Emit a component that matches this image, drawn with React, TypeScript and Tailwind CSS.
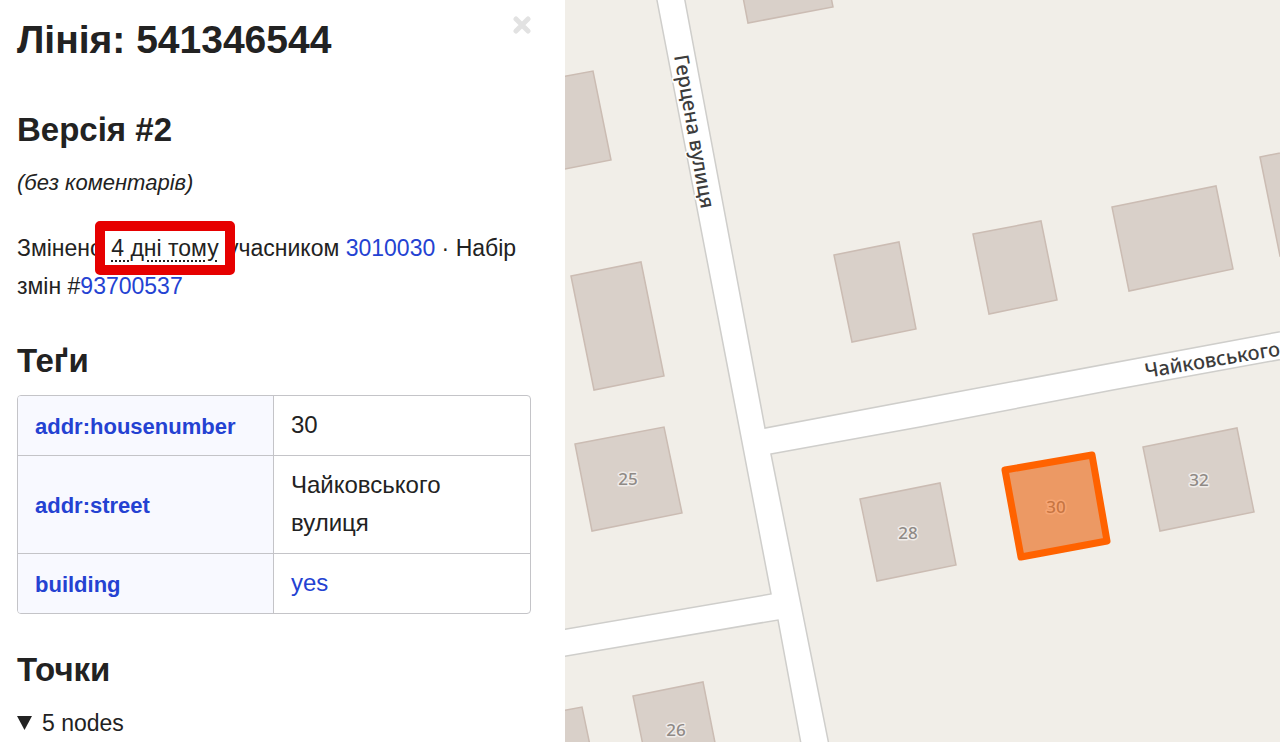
import type { ReactNode } from "react";

// ---------------------------------------------------------------------------
// Data
// ---------------------------------------------------------------------------
interface Tag {
  name: string;
  value: string;
  href?: string;
}

interface Building {
  points: string;
  label?: { text: string; x: number; y: number };
}

const TAGS: Tag[] = [
  { name: "addr:housenumber", value: "30" },
  { name: "addr:street", value: "Чайковського вулиця" },
  { name: "building", value: "yes", href: "#building-yes" },
];

// Land between the roads, the roads are the white gaps
const BLOCKS = [
  "555,-10 655,-10 730,380 771,594 555,631",
  "683,-10 1300,-10 1300,328 967,390 765,428",
  "771,454 920,427 1113,390 1300,356 1300,760 832,760",
  "555,658 778,620 804,760 555,760",
];

const SELECTED = "1005,470 1092,455 1107,541 1021,557";

const BUILDINGS: Building[] = [
  { points: "742,-8 748,23 833,7 830,-8" },
  { points: "550,79 593,71 611,160 550,172" },
  { points: "571,276 641,262 664,376 594,390" },
  { points: "834,255 899,242 916,329 852,342" },
  { points: "973,234 1041,221 1057,300 989,314" },
  { points: "1112,207 1216,186 1233,269 1129,291" },
  { points: "1260,157 1290,151 1310,250 1280,256" },
  { points: "575,444 664,427 682,513 592,531", label: { text: "25", x: 628, y: 485 } },
  { points: "860,499 940,483 956,565 877,581", label: { text: "28", x: 908, y: 539 } },
  { points: SELECTED, label: { text: "30", x: 1056, y: 513 } },
  { points: "1143,447 1237,428 1254,512 1160,531", label: { text: "32", x: 1199, y: 486 } },
  { points: "633,696 703,682 720,768 650,780", label: { text: "26", x: 676, y: 736 } },
  { points: "550,713 582,707 592,755 550,765" },
];

// ---------------------------------------------------------------------------
// Sidebar
// ---------------------------------------------------------------------------
function BlueLink({ href, children }: { href: string; children: ReactNode }) {
  return (
    <a href={href} className="text-[#2442d2] hover:underline">
      {children}
    </a>
  );
}

function TagTable() {
  return (
    <table className="mt-3 w-full table-fixed border-separate border-spacing-0 overflow-hidden rounded-[4px] border border-[#c4c4c8]">
      <tbody>
        {TAGS.map((tag) => (
          <tr key={tag.name} className="group">
            <th
              scope="row"
              className="border-r border-b border-[#c4c4c8] bg-[#f8f9ff] px-[17px] pt-[11px] pb-[9px] text-left text-[22px] group-last:border-b-0"
            >
              <BlueLink href={`#${tag.name}`}>{tag.name}</BlueLink>
            </th>
            <td className="border-b border-[#c4c4c8] px-[17px] pt-2.5 pb-[11px] text-2xl leading-[38px] group-last:border-b-0">
              {tag.href ? <BlueLink href={tag.href}>{tag.value}</BlueLink> : tag.value}
            </td>
          </tr>
        ))}
      </tbody>
    </table>
  );
}

function Sidebar() {
  return (
    <aside className="w-[565px] shrink-0 bg-white pr-[34px] pl-[17px]">
      <header className="flex items-start justify-between pt-4">
        <h1 className="text-[39px] leading-[48px] font-bold">Лінія: 541346544</h1>
        <button type="button" aria-label="Закрити" className="text-[#e2e2e2] hover:text-gray-400">
          <svg width="18" height="18" viewBox="0 0 18 18" fill="none">
            <path d="M3 3L15 15M15 3L3 15" stroke="currentColor" strokeWidth="5" strokeLinecap="round" />
          </svg>
        </button>
      </header>

      <h2 className="mt-11 text-[33px] leading-[44px] font-bold">Версія #2</h2>
      <p className="mt-3 text-[22px] italic">(без коментарів)</p>
      <p className="mt-[27px]">
        Змінено{" "}
        <span className="relative mx-0.5">
          <abbr
            title="15 листопада 2020"
            className="underline decoration-dotted decoration-2 underline-offset-4"
          >
            4 дні тому
          </abbr>
          <span className="pointer-events-none absolute -inset-x-4 -inset-y-3.5 rounded-[5px] border-10 border-[#e60000]" />
        </span>{" "}
        учасником <BlueLink href="#user">3010030</BlueLink> · Набір змін #
        <BlueLink href="#changeset">93700537</BlueLink>
      </p>

      <h2 className="mt-[34px] text-[33px] leading-[44px] font-bold">Теґи</h2>
      <TagTable />

      <h2 className="mt-[34px] text-[33px] leading-[44px] font-bold">Точки</h2>
      <details open className="mt-3">
        <summary className="flex cursor-pointer list-none items-center gap-2.5">
          <svg width="15" height="14" viewBox="0 0 15 14" fill="currentColor">
            <path d="M0 0H15L7.500 14Z" />
          </svg>
          5 nodes
        </summary>
      </details>
    </aside>
  );
}

// ---------------------------------------------------------------------------
// Map
// ---------------------------------------------------------------------------
function HouseNumber({ text, x, y }: { text: string; x: number; y: number }) {
  return (
    <text
      x={x}
      y={y}
      textAnchor="middle"
      className="fill-[#8f8a86] stroke-white/60 text-[17px] font-medium"
      strokeWidth="3"
      strokeLinejoin="round"
      paintOrder="stroke"
    >
      {text}
    </text>
  );
}

function MapView() {
  return (
    <main className="relative min-w-0 flex-1 overflow-hidden bg-white">
      <svg
        className="absolute inset-0 h-full w-full font-['Noto_Sans',sans-serif]"
        viewBox="565 0 715 742"
        preserveAspectRatio="xMinYMin slice"
        role="img"
        aria-label="Мапа"
      >
        {BLOCKS.map((points) => (
          <polygon key={points} points={points} fill="#f1eee8" stroke="#cfcecb" strokeWidth="1.500" />
        ))}
        {BUILDINGS.map(({ points, label }) => (
          <g key={points}>
            <polygon points={points} fill="#d9d0c9" stroke="#cbbcb3" strokeWidth="1.500" />
            {label && <HouseNumber {...label} />}
          </g>
        ))}

        {/* Street names */}
        <g className="fill-[#3c3c3c] stroke-white text-xl font-medium" strokeWidth="3" paintOrder="stroke">
          <text transform="translate(674 56) rotate(80)">Герцена вулиця</text>
          <text transform="translate(1146 378) rotate(-9.500)">Чайковського</text>
        </g>

        {/* Selected way */}
        <polygon
          points={SELECTED}
          fill="#ff6200"
          fillOpacity="0.5"
          stroke="#ff6200"
          strokeWidth="7"
          strokeLinejoin="round"
        />
      </svg>
    </main>
  );
}

export default function App() {
  return (
    <div className="flex min-h-screen bg-white font-['Liberation_Sans',Arial,sans-serif] text-[23px] leading-[38px] text-[#222]">
      <Sidebar />
      <MapView />
    </div>
  );
}
